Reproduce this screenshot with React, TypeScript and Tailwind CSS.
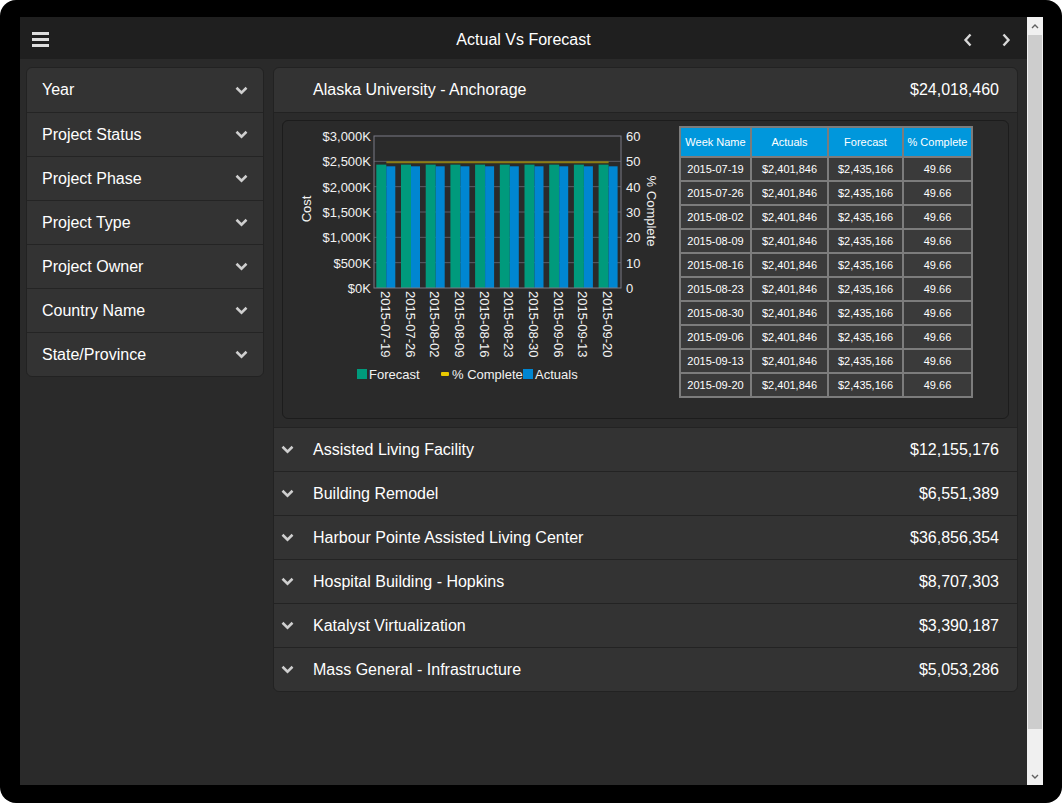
const filters = [
  "Year",
  "Project Status",
  "Project Phase",
  "Project Type",
  "Project Owner",
  "Country Name",
  "State/Province",
];

const projects = [
  { name: "Assisted Living Facility", value: "$12,155,176" },
  { name: "Building Remodel", value: "$6,551,389" },
  { name: "Harbour Pointe Assisted Living Center", value: "$36,856,354" },
  { name: "Hospital Building - Hopkins", value: "$8,707,303" },
  { name: "Katalyst Virtualization", value: "$3,390,187" },
  { name: "Mass General - Infrastructure", value: "$5,053,286" },
];

const weeks = [
  "2015-07-19",
  "2015-07-26",
  "2015-08-02",
  "2015-08-09",
  "2015-08-16",
  "2015-08-23",
  "2015-08-30",
  "2015-09-06",
  "2015-09-13",
  "2015-09-20",
];

function ChevronDown({ className = "" }: { className?: string }) {
  return (
    <svg width="13" height="9" viewBox="0 0 13 9" className={className}>
      <polyline points="1.5,1.8 6.5,6.6 11.5,1.8" fill="none" stroke="#cfcfcf" strokeWidth="2.6" />
    </svg>
  );
}

function Chart() {
  const left = 91;
  const right = 338;
  const top = 15;
  const bottom = 167;
  const h = bottom - top;
  const gw = (right - left) / 10;
  const yOf = (v: number) => bottom - (v / 3000000) * h;
  const fy = yOf(2435166);
  const ay = yOf(2401846);
  const py = bottom - (49.66 / 60) * h;
  const costTicks = ["$0K", "$500K", "$1,000K", "$1,500K", "$2,000K", "$2,500K", "$3,000K"];
  const pctTicks = ["0", "10", "20", "30", "40", "50", "60"];
  return (
    <svg width="392" height="290" viewBox="0 0 392 290" className="shrink-0" style={{ fontFamily: "'Liberation Sans', Arial, sans-serif" }}>
      {costTicks.map((t, i) => {
        const y = bottom - (i * h) / 6;
        return (
          <g key={t}>
            {i > 0 && i < 6 && <line x1={left} x2={right} y1={y} y2={y} stroke="#5d5d66" strokeWidth="1" />}
            <text x={left - 3} y={y + 5} textAnchor="end" fontSize="13" fill="#f2f2f2">
              {t}
            </text>
            <text x={right + 5} y={y + 5} fontSize="13" fill="#f2f2f2">
              {pctTicks[i]}
            </text>
          </g>
        );
      })}
      {weeks.map((w, i) => {
        const gx = left + i * gw;
        return (
          <g key={w}>
            <rect x={gx + 2.3} y={fy} width={10} height={bottom - fy} fill="#009a7c" />
            <rect x={gx + 12.3} y={ay} width={9} height={bottom - ay} fill="#0086d1" />
            <text
              transform={`translate(${gx + gw / 2 - 1},${bottom + 3}) rotate(90)`}
              dominantBaseline="central"
              fontSize="13"
              fill="#f2f2f2"
            >
              {w}
            </text>
          </g>
        );
      })}
      <line x1={left + gw / 2} x2={left + 9.5 * gw} y1={py} y2={py} stroke="#8c7d12" strokeWidth="2" />
      <rect x={left} y={top} width={right - left} height={h} fill="none" stroke="#7a7a86" strokeWidth="1" />
      <text transform="translate(28,88) rotate(-90)" textAnchor="middle" fontSize="13" fill="#f2f2f2">
        Cost
      </text>
      <text transform="translate(364,90) rotate(90)" textAnchor="middle" fontSize="13" fill="#f2f2f2">
        % Complete
      </text>
      <rect x="74" y="248" width="10" height="10" fill="#009a7c" />
      <text x="86" y="258" fontSize="13" fill="#f2f2f2">
        Forecast
      </text>
      <rect x="158" y="251" width="8" height="4" rx="1" fill="#e8c800" />
      <text x="169" y="258" fontSize="13" fill="#f2f2f2">
        % Complete
      </text>
      <rect x="240" y="248" width="10" height="10" fill="#0086d1" />
      <text x="252" y="258" fontSize="13" fill="#f2f2f2">
        Actuals
      </text>
    </svg>
  );
}

function DataTable() {
  const cell = "border-2 border-[#7c7c7c] text-center text-[11px] text-white px-0 whitespace-nowrap";
  return (
    <table className="border-collapse mt-[5px] h-fit">
      <thead>
        <tr className="bg-[#0097dc] h-[30px]">
          <th className={`${cell} font-normal w-[71px]`}>Week Name</th>
          <th className={`${cell} font-normal w-[77px]`}>Actuals</th>
          <th className={`${cell} font-normal w-[75px]`}>Forecast</th>
          <th className={`${cell} font-normal w-[69px]`}>% Complete</th>
        </tr>
      </thead>
      <tbody>
        {weeks.map((w) => (
          <tr key={w} className="bg-[#3a3a3a] h-[24px]">
            <td className={cell}>{w}</td>
            <td className={cell}>$2,401,846</td>
            <td className={cell}>$2,435,166</td>
            <td className={cell}>49.66</td>
          </tr>
        ))}
      </tbody>
    </table>
  );
}

export default function App() {
  return (
    <div className="h-screen bg-white" style={{ fontFamily: "'Liberation Sans', Arial, sans-serif" }}>
      <div className="h-[803px] w-[1062px] bg-black rounded-[16px] pl-[20px] pt-[17px] pr-[19px] pb-[18px] flex">
        <div className="flex-1 flex flex-col bg-[#2a2a2a] min-w-0">
          <header className="h-[42px] bg-[#1f1f1f] grid grid-cols-[1fr_auto_1fr] items-center px-3 shrink-0 pt-[3px]">
            <div className="flex flex-col gap-[3px] w-[17px]">
              <span className="h-[3px] bg-[#dedede] block" />
              <span className="h-[3px] bg-[#dedede] block" />
              <span className="h-[3px] bg-[#dedede] block" />
            </div>
            <h1 className="text-center text-white text-[16px]">Actual Vs Forecast</h1>
            <div className="flex items-center justify-end gap-[28px] pr-[4px]">
              <svg width="10" height="14" viewBox="0 0 10 14">
                <polyline points="7.5,1.5 2.5,7 7.5,12.5" fill="none" stroke="#d8d8d8" strokeWidth="2.4" />
              </svg>
              <svg width="10" height="14" viewBox="0 0 10 14">
                <polyline points="2.5,1.5 7.5,7 2.5,12.5" fill="none" stroke="#d8d8d8" strokeWidth="2.4" />
              </svg>
            </div>
          </header>
          <div className="flex-1 flex gap-[9px] pt-[8px] pl-[6px] pr-[9px] min-h-0">
            <aside className="w-[238px] shrink-0 self-start bg-[#333333] rounded-md border border-[#222] overflow-hidden">
              {filters.map((f, i) => (
                <div
                  key={f}
                  className={`h-[44px] flex items-center justify-between pl-[15px] pr-[15px] text-white text-[16px] ${i > 0 ? "border-t border-[#242424]" : ""}`}
                >
                  <span>{f}</span>
                  <ChevronDown />
                </div>
              ))}
            </aside>
            <main className="flex-1 self-start bg-[#333333] rounded-md border border-[#222] overflow-hidden">
              <div className="h-[44px] flex items-center justify-between pl-[39px] pr-[18px] text-white text-[16px]">
                <span>Alaska University - Anchorage</span>
                <span>$24,018,460</span>
              </div>
              <div className="bg-[#2b2b2b] border-t border-[#222] px-[8px] pt-[7px] pb-[8px]">
                <div className="h-[299px] bg-[#2a2a2a] border border-[#1c1c1c] rounded-md flex">
                  <Chart />
                  <div className="ml-[4px]">
                    <DataTable />
                  </div>
                </div>
              </div>
              {projects.map((p) => (
                <div
                  key={p.name}
                  className="h-[44px] flex items-center border-t border-[#232323] pl-[7px] pr-[18px] text-white text-[16px]"
                >
                  <ChevronDown className="mr-[19px]" />
                  <span className="flex-1">{p.name}</span>
                  <span>{p.value}</span>
                </div>
              ))}
            </main>
          </div>
        </div>
        <div className="w-[16px] shrink-0 bg-[#f0f0f0] flex flex-col">
          <div className="h-[18px] flex items-center justify-center">
            <svg width="8" height="5" viewBox="0 0 8 5">
              <polyline points="1,4 4,1 7,4" fill="none" stroke="#606060" strokeWidth="1.4" />
            </svg>
          </div>
          <div className="h-[694px] mx-[1px] bg-[#cdcdcd]" />
          <div className="flex-1" />
          <div className="h-[18px] flex items-center justify-center">
            <svg width="8" height="5" viewBox="0 0 8 5">
              <polyline points="1,1 4,4 7,1" fill="none" stroke="#606060" strokeWidth="1.4" />
            </svg>
          </div>
        </div>
      </div>
    </div>
  );
}
